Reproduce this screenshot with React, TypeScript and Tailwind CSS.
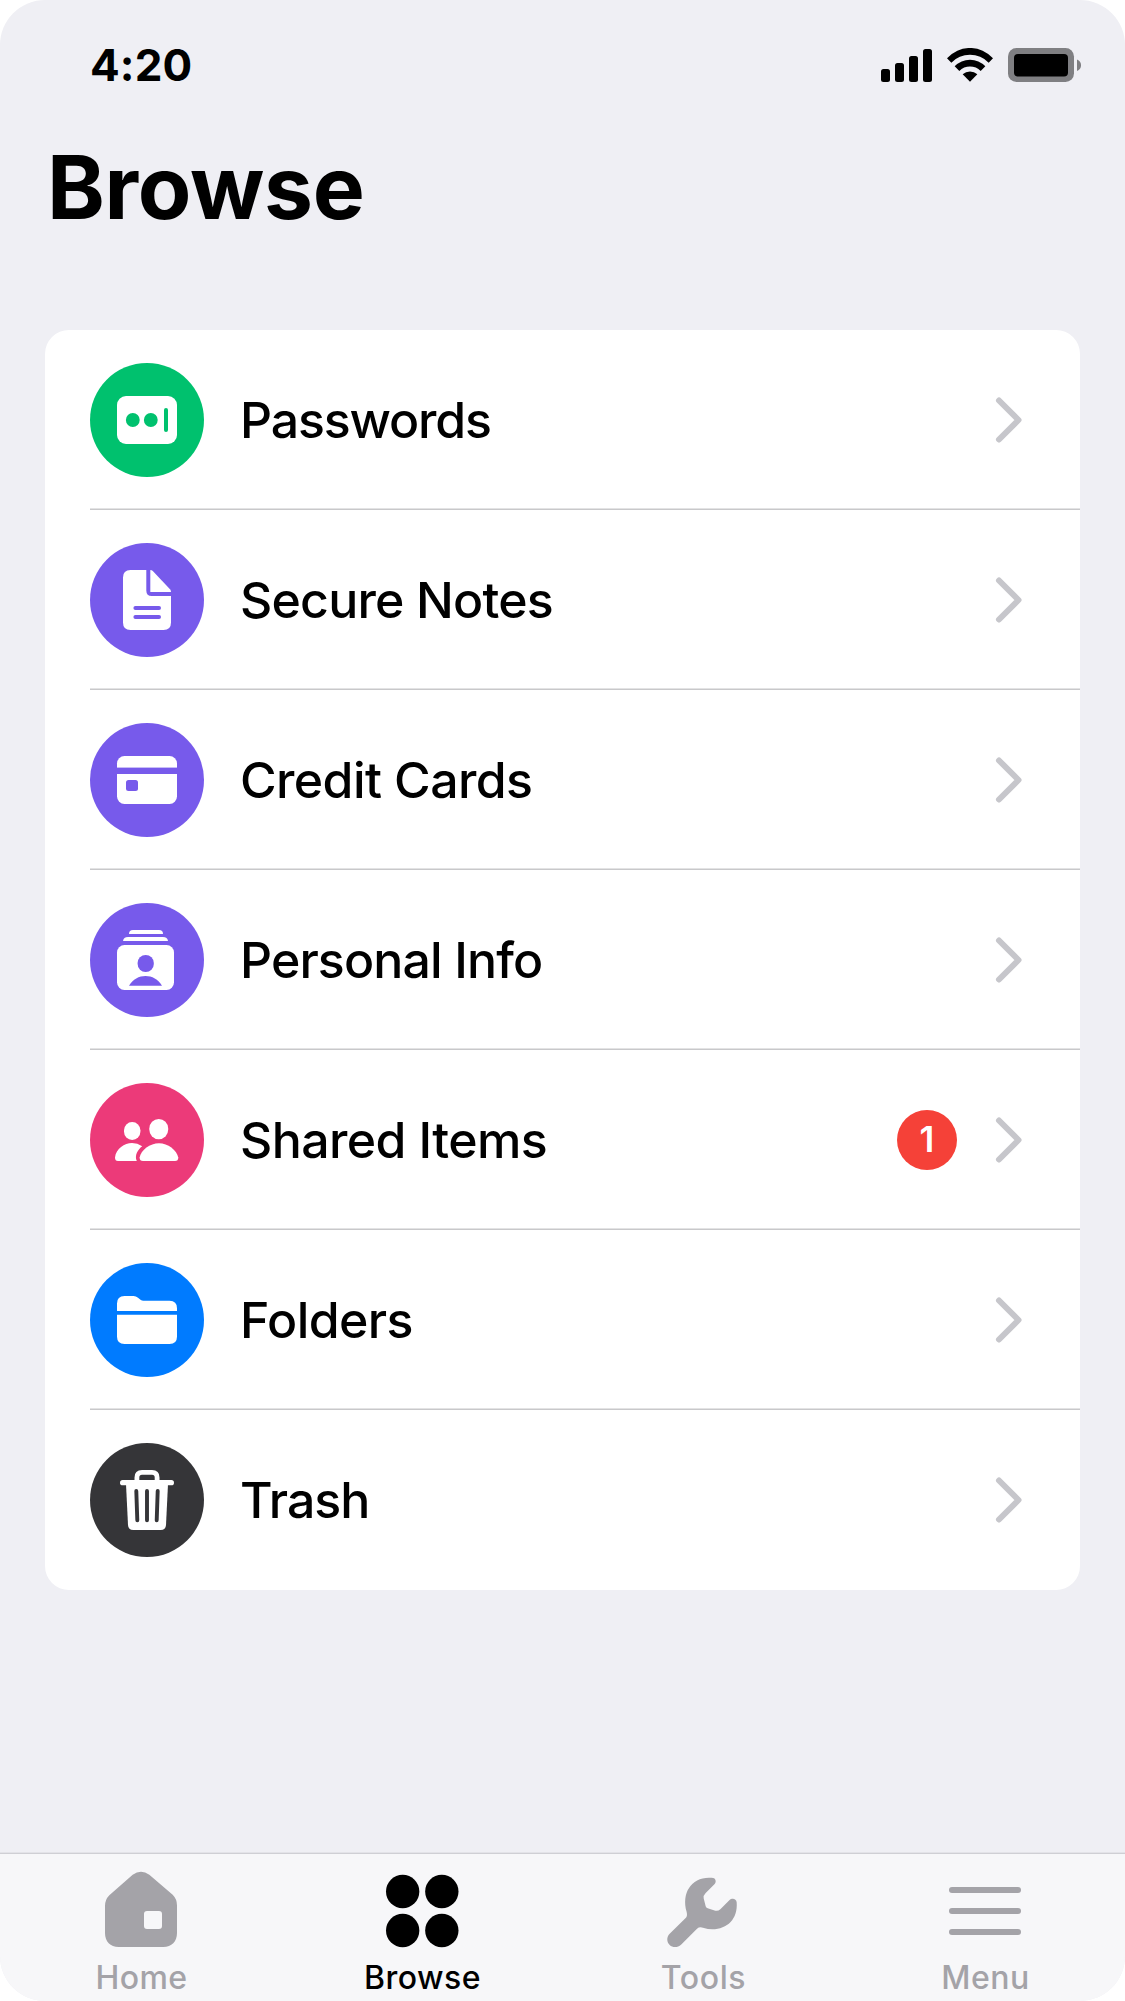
import type { ReactNode } from 'react';
import { clsx } from 'clsx';

interface BrowseItem {
  label: string;
  color: string;
  tracking: string;
  icon: ReactNode;
  badge?: number;
}

interface TabItem {
  label: string;
  width: string;
  tracking: string;
  viewBox: string;
  icon: ReactNode;
  active?: boolean;
}

const items: BrowseItem[] = [
  {
    label: 'Passwords',
    color: 'text-[#00c16e]',
    tracking: 'tracking-[-1.15px]',
    icon: (
      <>
        <rect x="27" y="33" width="60" height="48" rx="9" fill="#fff" />
        <circle cx="42.8" cy="57" r="6.9" />
        <circle cx="60.8" cy="57" r="6.9" />
        <rect x="74" y="45" width="4" height="24" rx="2" />
      </>
    ),
  },
  {
    label: 'Secure Notes',
    color: 'text-[#775aeb]',
    tracking: 'tracking-[-0.8px]',
    icon: (
      <>
        <path
          fill="#fff"
          d="M40.5 27H56.3V47.5Q56.3 53 61.8 53H81V79.5Q81 87 73.5 87H40.5Q33 87 33 79.5V34.5Q33 27 40.5 27Z"
        />
        <path fill="#fff" d="M60.3 27Q61.8 27 62.8 28L80 46.3Q81 47.4 81 49H60.3Z" />
        <path stroke="currentColor" strokeWidth="4" strokeLinecap="round" d="M45.4 65H69M45.4 74H69" />
      </>
    ),
  },
  {
    label: 'Credit Cards',
    color: 'text-[#775aeb]',
    tracking: 'tracking-[-0.6px]',
    icon: (
      <>
        <rect x="27" y="33" width="60" height="48" rx="7.5" fill="#fff" />
        <rect x="27" y="44.6" width="60" height="6.4" />
        <rect x="36" y="57" width="12" height="11" rx="2.5" />
      </>
    ),
  },
  {
    label: 'Personal Info',
    color: 'text-[#775aeb]',
    tracking: 'tracking-[-0.87px]',
    icon: (
      <>
        <g fill="#fff">
          <path d="M39 31Q39 27 43 27H69Q73 27 73 31Z" />
          <path d="M33 38Q33.5 34 38 34H73Q77.5 34 78 38Z" />
          <rect x="27" y="42" width="57" height="45" rx="7.5" />
        </g>
        <rect x="47.6" y="52" width="16.2" height="17" rx="8.1" />
        <path d="M39 82.8C46.5 69.8 64.5 69.8 72 82.8Z" />
      </>
    ),
  },
  {
    label: 'Shared Items',
    color: 'text-[#ec3a79]',
    tracking: 'tracking-[-0.6px]',
    badge: 1,
    icon: (
      <g fill="#fff">
        <rect x="34" y="39" width="16.4" height="18" rx="8.2" />
        <rect x="59.3" y="36" width="18.9" height="20.3" rx="9.45" />
        <path d="M46.8 78H28Q25 78 25 74.5C26 65.5 34.5 60 42 60Q47.5 60 52.2 63.2C47.8 66.5 44.2 72.500 46.8 78Z" />
        <path d="M53 78Q49.6 78 49.6 74.5C51 67 60 60.3 69 60.3C78 60.3 86.5 67 88.3 74.5Q88.3 78 85 78Z" />
      </g>
    ),
  },
  {
    label: 'Folders',
    color: 'text-[#007bff]',
    tracking: 'tracking-[-0.6px]',
    icon: (
      <g fill="#fff">
        <path d="M27 48V40.5Q27 33 34.5 33H43.5Q46 33 48 34.8L50.5 36.8Q51.8 37.8 53.5 37.8H79.5Q87 37.8 87 45.3V48Z" />
        <path d="M27 51.8H87V73.5Q87 81 79.5 81H34.5Q27 81 27 73.5Z" />
      </g>
    ),
  },
  {
    label: 'Trash',
    color: 'text-[#353538]',
    tracking: 'tracking-[-1px]',
    icon: (
      <>
        <path
          fill="none"
          stroke="#fff"
          strokeWidth="4.8"
          d="M46.9 39V34.5Q46.9 29.4 52 29.4H62Q67.1 29.4 67.1 34.5V39"
        />
        <rect x="30" y="37" width="54" height="5.3" rx="2.65" fill="#fff" />
        <path fill="#fff" d="M36 41H78L76 82Q75.7 87 70.7 87H43.3Q38.3 87 38 82Z" />
        <path
          stroke="currentColor"
          strokeWidth="3.9"
          strokeLinecap="round"
          d="M46.3 48L47.3 77.3M57 48V77.3M67.7 48L66.7 77.3"
        />
      </>
    ),
  },
];

const tabs: TabItem[] = [
  {
    label: 'Home',
    width: 'w-[282px]',
    tracking: 'tracking-[0.4px]',
    viewBox: '297 84 252 243',
    icon: (
      <path
        fillRule="evenodd"
        d="M398 104Q423 87 448 104L518 164Q531 177 531 196V279C531 305 515 321 490 321H356C331 321 315 305 315 279V198Q315 179 328 166ZM441 213Q432 213 432 222V258Q432 267 441 267H477Q486 267 486 258V222Q486 213 477 213Z"
      />
    ),
  },
  {
    label: 'Browse',
    width: 'w-[280px]',
    tracking: 'tracking-[0.5px]',
    viewBox: '1140 84 252 243',
    active: true,
    icon: (
      <>
        <circle cx="1208" cy="154.5" r="50" />
        <circle cx="1325.5" cy="154.5" r="50" />
        <circle cx="1208" cy="271.5" r="50" />
        <circle cx="1325.5" cy="271.5" r="50" />
      </>
    ),
  },
  {
    label: 'Tools',
    width: 'w-[282px]',
    tracking: 'tracking-[0.6px]',
    viewBox: '182 84 252 243',
    icon: (
      <path d="M208 281L256 234Q262 228 259 216C243 160 272 113 326 113L334 113C346 113 349 124 343 132L316 159Q308 167 310 175L316 199Q317 204 322 205L345 212Q353 214 360 208L387 181C395 173 408 176 409 187C413 237 381 268 336 268Q323 268 308 263Q297 260 290 266L242 314C233 323 217 324 208 315C199 306 198 291 208 281Z" />
    ),
  },
  {
    label: 'Menu',
    width: 'w-[282px]',
    tracking: 'tracking-[0.5px]',
    viewBox: '1023 84 252 243',
    icon: (
      <>
        <rect x="1041" y="141" width="216" height="18" rx="9" />
        <rect x="1041" y="204" width="216" height="18" rx="9" />
        <rect x="1041" y="267" width="216" height="18" rx="9" />
      </>
    ),
  },
];

function StatusBar() {
  return (
    <div className="flex h-[130px] items-center justify-between pl-[90px] pr-[44px]">
      <span className="text-[44px] font-bold leading-none tracking-[0.1px]">4:20</span>
      <div className="flex items-center pb-px">
        <svg className="mr-[15px] h-[34px] w-[51px]" viewBox="0 0 51 34">
          <rect x="0" y="21" width="9" height="13" rx="2.5" />
          <rect x="14" y="15" width="9" height="19" rx="2.5" />
          <rect x="28" y="8" width="9" height="26" rx="2.5" />
          <rect x="42" y="1" width="9" height="33" rx="2.5" />
        </svg>
        <svg className="mr-[15px] h-[34px] w-[46px]" viewBox="261 141 138 102">
          <path d="M261 172A92 92 0 0 1 399 172L386 185A78 78 0 0 0 274 185Z" />
          <path d="M284 196A64 64 0 0 1 376 196L362 210A44 44 0 0 0 298 210Z" />
          <path d="M308 220A32 32 0 0 1 352 220L330 242Z" />
        </svg>
        <svg className="h-[34px] w-[73px]" viewBox="0 0 73 34">
          <rect width="66" height="34" rx="8.5" fill="#7f7f82" />
          <rect x="6" y="6" width="54" height="22.5" rx="4" />
          <path d="M69 11.5Q73 13 73 17.2Q73 21.400 69 23Z" fill="#7f7f82" />
        </svg>
      </div>
    </div>
  );
}

function BrowseRow({ item, last }: { item: BrowseItem; last: boolean }) {
  return (
    <li className="pl-[45px]">
      <div className="flex h-[178px] items-center pr-[57px] pt-[2px]">
        <svg className={clsx('h-[114px] w-[114px] shrink-0', item.color)} viewBox="0 0 114 114" fill="currentColor">
          <circle cx="57" cy="57" r="57" />
          {item.icon}
        </svg>
        <span className={clsx('ml-9 flex-1 text-[50px] font-medium leading-none', item.tracking)}>{item.label}</span>
        {item.badge && (
          <span className="mr-9 flex size-[60px] items-center justify-center rounded-full bg-[#f54138] pb-px text-[35px] font-semibold leading-none text-white">
            {item.badge}
          </span>
        )}
        <svg className="h-[48px] w-[30px]" viewBox="0 0 30 48" fill="none">
          <path d="M6 4.5L25.5 24L6 43.5" stroke="#c6c6cb" strokeWidth="6" strokeLinecap="round" strokeLinejoin="round" />
        </svg>
      </div>
      {last ? <div className="h-[2px]" /> : <div className="h-[2px] border-b border-[#c8c8ca] bg-[#e3e3e4]" />}
    </li>
  );
}

export default function App() {
  return (
    <div className="bg-white">
      <div className="flex h-[2001px] w-[1125px] flex-col overflow-hidden rounded-[45px] bg-[#efeff4] font-['Inter',sans-serif] text-black">
        <StatusBar />
        <h1 className="h-[200px] pl-[47px] text-[87.5px] font-bold leading-[114px] tracking-[-0.3px]">Browse</h1>

        <ul className="mx-[45px] overflow-hidden rounded-[24px] bg-white">
          {items.map((item, i) => (
            <BrowseRow key={item.label} item={item} last={i === items.length - 1} />
          ))}
        </ul>

        <nav className="mt-auto flex h-[149px] border-t border-[#e3e3e8] bg-[#f7f7f9]">
          {tabs.map((tab) => (
            <a
              key={tab.label}
              className={clsx(
                'flex shrink-0 flex-col items-center border-t border-[#cfcfd4] pt-[14px]',
                tab.width,
                tab.active ? 'text-black' : 'text-[#a4a3a8]'
              )}
            >
              <svg className="h-[81px] w-[84px]" viewBox={tab.viewBox} fill="currentColor">
                {tab.icon}
              </svg>
              <span className={clsx('mt-[9px] pl-px text-[32px] font-medium leading-[40px]', tab.tracking)}>{tab.label}</span>
            </a>
          ))}
        </nav>
      </div>
    </div>
  );
}
